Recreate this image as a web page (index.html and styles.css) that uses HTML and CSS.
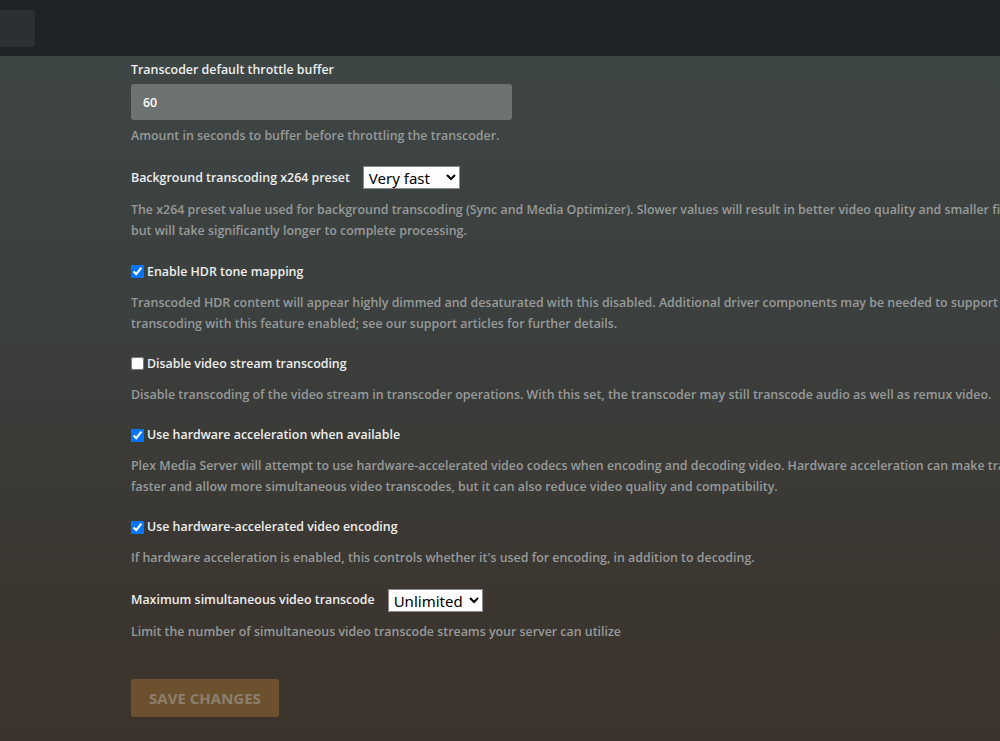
FILE: index.html
```html
<!DOCTYPE html>
<html lang="en">
<head>
<meta charset="utf-8">
<title>Transcoder settings</title>
<link rel="stylesheet" href="styles.css">
</head>
<body>
<header class="topbar">
  <div class="search-stub"></div>
</header>
<main class="page">
  <form class="settings">
    <div class="field">
      <label class="label" for="throttle">Transcoder default throttle buffer</label>
      <input class="text-input" id="throttle" type="text" value="60">
      <p class="desc desc-tight">Amount in seconds to buffer before throttling the transcoder.</p>
    </div>

    <div class="field">
      <div class="row">
        <label class="label" for="preset">Background transcoding x264 preset</label>
        <select class="select select-preset" id="preset">
          <option>Very fast</option>
        </select>
      </div>
      <p class="desc">The x264 preset value used for background transcoding (Sync and Media Optimizer). Slower values will result in better video quality and smaller files<br>but will take significantly longer to complete processing.</p>
    </div>

    <div class="field">
      <label class="check"><input type="checkbox" checked><span>Enable HDR tone mapping</span></label>
      <p class="desc">Transcoded HDR content will appear highly dimmed and desaturated with this disabled. Additional driver components may be needed to support<br>transcoding with this feature enabled; see our support articles for further details.</p>
    </div>

    <div class="field">
      <label class="check"><input type="checkbox"><span>Disable video stream transcoding</span></label>
      <p class="desc">Disable transcoding of the video stream in transcoder operations. With this set, the transcoder may still transcode audio as well as remux video.</p>
    </div>

    <div class="field">
      <label class="check"><input type="checkbox" checked><span>Use hardware acceleration when available</span></label>
      <p class="desc">Plex Media Server will attempt to use hardware-accelerated video codecs when encoding and decoding video. Hardware acceleration can make transcoding<br>faster and allow more simultaneous video transcodes, but it can also reduce video quality and compatibility.</p>
    </div>

    <div class="field">
      <label class="check"><input type="checkbox" checked><span>Use hardware-accelerated video encoding</span></label>
      <p class="desc">If hardware acceleration is enabled, this controls whether it's used for encoding, in addition to decoding.</p>
    </div>

    <div class="field">
      <div class="row">
        <label class="label" for="maxtc">Maximum simultaneous video transcode</label>
        <select class="select select-max" id="maxtc">
          <option>Unlimited</option>
        </select>
      </div>
      <p class="desc desc-last">Limit the number of simultaneous video transcode streams your server can utilize</p>
    </div>

    <button class="save" type="button" disabled>Save Changes</button>
  </form>
</main>
</body>
</html>
```

FILE: styles.css
```css
html, body {
  margin: 0;
  padding: 0;
  height: 100%;
}

body {
  overflow: hidden;
  font-family: "Open Sans", "Noto Sans", sans-serif;
  font-size: 12.4px;
  background: linear-gradient(to bottom, #3f4747 0%, #3b3f3d 45%, #3b3630 80%, #3c342c 100%);
  color: #eeeeee;
}

.topbar {
  height: 56px;
  background: #1f2326;
  display: flex;
  align-items: center;
}

.search-stub {
  width: 35px;
  height: 37px;
  background: #2c3033;
  border-radius: 0 4px 4px 0;
}

.page {
  padding: 4px 0 0 131px;
}

.settings {
  width: 1100px;
}

.field {
  margin-bottom: 20.3px;
}

.label {
  display: block;
  font-weight: 600;
  line-height: 20px;
  color: #eeeeee;
}

.row {
  display: flex;
  align-items: center;
  min-height: 23px;
}

.row .label {
  margin-right: 13px;
}

.text-input {
  display: block;
  box-sizing: border-box;
  width: 381px;
  height: 36px;
  margin-top: 4px;
  padding: 0 12px;
  border: 0;
  border-radius: 3px;
  background: #6d7371;
  color: #ffffff;
  font-family: "Open Sans", "Noto Sans", sans-serif;
  font-size: 12.4px;
  font-weight: 600;
  outline: none;
}

.select {
  box-sizing: border-box;
  height: 23px;
  padding: 0 0 0 1px;
  border: 1px solid #8a8a8a;
  border-radius: 0;
  background: #ffffff;
  color: #000000;
  font-family: "Noto Sans", "Open Sans", sans-serif;
  font-size: 15px;
  line-height: 20px;
}

.select-preset {
  width: 97px;
}

.select-max {
  width: 95px;
}

.check {
  display: flex;
  align-items: center;
  line-height: 20px;
  font-weight: 600;
  color: #eeeeee;
}

.check input {
  width: 13px;
  height: 13px;
  margin: 0 3px 0 0;
}

.desc {
  margin: 10px 0 0;
  white-space: nowrap;
  line-height: 21px;
  font-weight: 600;
  color: #979a9a;
}

.desc-tight {
  margin-top: 5px;
}

.desc-last {
  margin-top: 9px;
}

.save {
  margin-top: 17px;
  width: 148px;
  height: 38px;
  padding: 0;
  border: 0;
  border-radius: 3px;
  background: #6d512e;
  color: #8b7f6f;
  font-family: "Open Sans", "Noto Sans", sans-serif;
  font-size: 15px;
  font-weight: 700;
  text-transform: uppercase;
}
```
